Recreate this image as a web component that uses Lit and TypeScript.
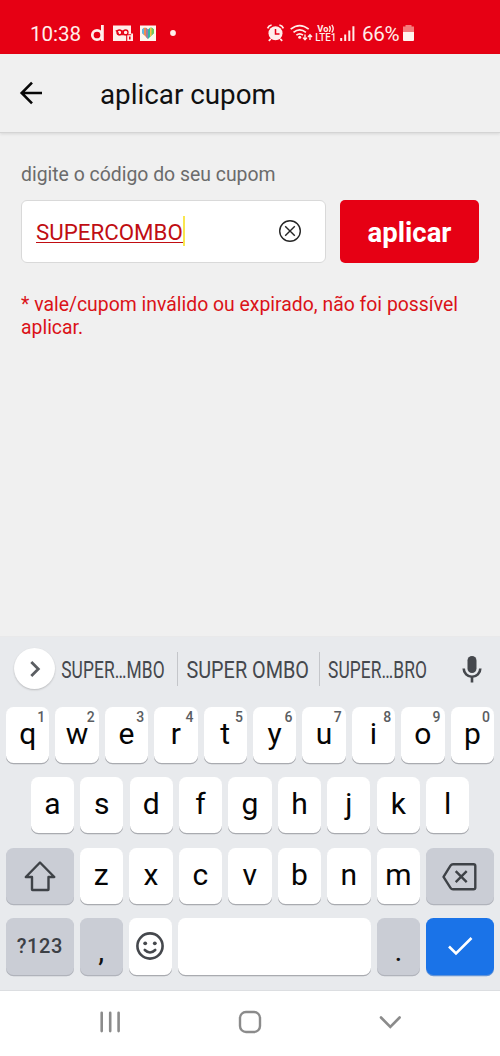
import { LitElement, html, css } from "lit";
import { customElement, property } from "lit/decorators.js";

const topRow = "qwertyuiop".split("");
const homeRow = "asdfghjkl".split("");
const bottomRow = "zxcvbnm".split("");

@customElement("status-bar")
class StatusBar extends LitElement {
  static styles = css`
    :host { display: block; height: 54px; background: #e60014; color: #ffeeea; }
    .bar { display: flex; align-items: center; height: 30px; padding: 18px 86px 6px 30px; font-size: 20.6px; line-height: 30px; }
    .clock { width: 51px; letter-spacing: -0.05px; }
    .left { flex: none; margin-left: 9px; }
    .right { flex: none; margin-left: auto; }
    .percent { width: 38px; margin: 0 3px 0 6px; letter-spacing: -0.3px; }
    .battery { flex: none; }
    .net { font-weight: 700; }
    .clock, .percent { padding-top: 1px; }
  `;
  render() {
    return html`<div class="bar">
      <span class="clock">10:38</span>
      <svg class="left" width="90" height="30" viewBox="90 18 90 30" fill="none">
        <circle cx="97" cy="35" r="4.7" stroke="#ffeeea" stroke-width="2.7" />
        <path d="M102.4 25V41" stroke="#ffeeea" stroke-width="2.8" />
        <path d="M113 25.5h18v8h2v7.5h-20z" fill="#ffeeea" />
        <circle cx="119.4" cy="32.4" r="2.4" stroke="#e60014" stroke-width="1.3" />
        <circle cx="125.6" cy="32.4" r="2.4" stroke="#e60014" stroke-width="1.3" />
        <path d="M115.7 30.6q2 0 3 4.2h4M122.3 30.2v4.6h4M126.7 41v-6.3h4.5" stroke="#e60014" stroke-width="1.1" />
        <path d="M129 36.5h1.6v3H129z" fill="#e60014" />
        <path d="M140 25.5h16V41h-16z" fill="#fff7ee" />
        <path d="M148 39l-6-6v-3.5l2-1.8h2l2 1.8z" fill="#f08b50" />
        <path d="M142 29.5l2-1.8v7.3l-2-2z" fill="#5db9e5" />
        <path d="M146 27.8l2 1.7V39l-2-2z" fill="#9a7fa8" />
        <path d="M148 39l6-6v-3.5l-2-1.8h-2l-2 1.8z" fill="#33b7a1" />
        <path d="M150 27.7h1.8v7.6L150 37z" fill="#f4c63d" />
        <path d="M151.8 27.7l2.2 1.8V33l-2.2 2.2z" fill="#75c95d" />
        <circle cx="173" cy="33" r="2.9" fill="#ffeeea" />
      </svg>
      <svg class="right" width="90" height="30" viewBox="266 18 90 30" fill="none" stroke="#ffeeea">
        <circle cx="275.5" cy="33.3" r="7" fill="#ffeeea" stroke="none" />
        <path d="M267.6 28.4q1-2.8 4-3.4M283.4 28.4q-1-2.8-4-3.4M270.8 38.8l-2 2M280.2 38.8l2 2" stroke-width="1.7" />
        <path d="M275.5 29v5h4" stroke="#e60014" stroke-width="1.5" />
        <path d="M290.7 29.2q9-7.3 18 0M293.5 32.3q6.2-5 12.4 0M296.4 35.2q3.3-2.7 6.6 0" stroke-width="1.7" />
        <circle cx="299.7" cy="37.2" r="1.5" fill="#ffeeea" stroke="none" />
        <path d="M305 34.6v5M303 37.6l2 2.2 2-2.2M310 40v-5M308 37l2-2.3 2 2.3" stroke-width="1.4" />
        <g class="net" fill="#ffeeea" stroke="none">
          <text x="317.3" y="31.8" font-size="9.3" textLength="11.2">Vo</text>
          <text x="315.3" y="41.2" font-size="10.2" font-weight="500" textLength="21" lengthAdjust="spacingAndGlyphs">LTE1</text>
        </g>
        <path d="M329.3 26q2 2.8 0 5.8M331.8 24.9q2.8 3.9 0 7.6" stroke-width="1.3" />
        <path d="M341.2 38v3M345.2 34.6V41M349.3 30.5V41M353.4 26.3V41" stroke-width="2" />
      </svg>
      <span class="percent">66%</span>
      <svg class="battery" width="11" height="30" viewBox="403 18 11 30">
        <path d="M405.5 25h6v1.5h2.5v5.5h-11v-5.5h2.5z" fill="#f47c7c" />
        <path d="M403 32h11v8q0 1-1 1h-9q-1 0-1-1z" fill="#fff5ee" />
      </svg>
    </div>`;
  }
}

@customElement("key-cap")
class KeyCap extends LitElement {
  @property() hint = "";
  static styles = css`
    :host { display: flex; position: relative; align-items: center; justify-content: center; box-sizing: border-box;
      min-width: 0; height: 56px; border-radius: 7.5px; background: #fff; box-shadow: 0 1.2px 0 #a9abb0;
      font-size: 30px; line-height: 40px; color: #050505; padding-bottom: 2px; }
    :host(.dim) { background: #cacdd5; box-shadow: 0 1.2px 0 #b0b3bb; color: #3c4045; }
    :host(.go) { background: #1a73e8; box-shadow: 0 1.2px 0 #6294d8; }
    :host(.low) { height: 57px; padding-bottom: 0; }
    :host(.mode) { font-size: 20px; font-weight: 500; letter-spacing: 0.6px; }
    :host(.punct) { color: #111; padding-top: 9px; }
    .hint { position: absolute; top: 2px; right: 4px; font-size: 14px; font-weight: 500; line-height: 16px; color: #5a5d61; }
  `;
  render() {
    return html`<slot></slot>${this.hint ? html`<span class="hint">${this.hint}</span>` : ""}`;
  }
}

@customElement("soft-keyboard")
class SoftKeyboard extends LitElement {
  static styles = css`
    :host { display: block; height: 355px; background: #e8eaed; box-sizing: border-box; border-top: 1px solid #e9e9ea; border-bottom: 1px solid #dcdee1; }
    .suggestions { display: flex; align-items: center; height: 70px; box-sizing: border-box; padding: 0 15px 7px 13.5px; }
    .more { flex: none; display: grid; place-items: center; width: 41px; height: 41px; border-radius: 50%; background: #fff; box-shadow: 0 1px 2px #0003; }
    .word { flex: none; height: 34px; }
    .first { width: 122.5px; }
    .second { width: 141px; }
    .third { width: 111px; }
    .word + .word { border-left: 1px solid #c4c6ca; }
    .mic { flex: none; margin-left: auto; }
    .rows { display: grid; grid-template-rows: 56px 56px 56px 57px; row-gap: 14.2px; padding: 0.3px 6px 0; }
    .row { display: grid; grid-template-columns: repeat(10, 1fr); column-gap: 6.1px; }
    .home { grid-template-columns: repeat(9, 1fr); padding: 0 24.7px; }
    .bottom { grid-template-columns: 67.5px repeat(7, 1fr) 67.8px; }
    .space { grid-template-columns: 67.5px 43.2px 43.2px 1fr 43.2px 67.8px; }
  `;
  word(text: string, cls: string, x: number, width: number, squeeze: number) {
    return html`<svg class="word ${cls}" fill="#45484d">
      <g transform="translate(${x} 26) scale(${squeeze} 1)">
        <text font-size="24.5" textLength=${width / squeeze}>${text}</text>
      </g>
    </svg>`;
  }
  render() {
    return html`
      <div class="suggestions">
        <div class="more"><svg width="20" height="20" fill="none" stroke="#5b5e62" stroke-width="2.8"><path d="M7.3 3l7 7-7 7" /></svg></div>
        ${this.word("SUPER…MBO", "first", 6.2, 103.5, 0.71)}
        ${this.word("SUPER OMBO", "second", 8.5, 122.5, 0.81)}
        ${this.word("SUPER…BRO", "third", 8, 99, 0.71)}
        <svg class="mic" width="26" height="30" viewBox="0 0 26 30" fill="none" stroke="#45484d" stroke-width="2.6">
          <rect x="8.5" y="2" width="9" height="17" rx="4.5" fill="#45484d" stroke="none" />
          <path d="M4.7 14.5a8.3 8.3 0 0 0 16.6 0M13 22.5V28.5" />
        </svg>
      </div>
      <div class="rows">
        <div class="row">${topRow.map((k, i) => html`<key-cap .hint=${String((i + 1) % 10)}>${k}</key-cap>`)}</div>
        <div class="row home">${homeRow.map((k) => html`<key-cap>${k}</key-cap>`)}</div>
        <div class="row bottom">
          <key-cap class="dim"><svg width="34" height="34" fill="none" stroke="#3e4247" stroke-width="2.4" stroke-linejoin="round"><path d="M17 4.5L31.3 19H25.5V31.5Q25.5 32 25 32H9.5Q9 32 9 31.5V19H2.8Z" /></svg></key-cap>
          ${bottomRow.map((k) => html`<key-cap>${k}</key-cap>`)}
          <key-cap class="dim"><svg width="38" height="34" fill="none" stroke="#3e4247" stroke-width="2.4" stroke-linejoin="round"><path d="M12 6.2H32.5Q34.3 6.2 34.3 8V29.5Q34.3 31.3 32.5 31.3H12Q10.5 31.3 9.5 29.8L2.5 18.8L9.5 7.7Q10.5 6.2 12 6.2ZM14.7 13.2L25.7 24.2M25.7 13.2L14.7 24.2" /></svg></key-cap>
        </div>
        <div class="row space">
          <key-cap class="dim low mode">?123</key-cap>
          <key-cap class="dim low punct">,</key-cap>
          <key-cap class="low"><svg width="30" height="30" fill="none" stroke="#45484d" stroke-width="2.6" stroke-linecap="round"><circle cx="15" cy="15" r="12.6" /><path d="M9.8 19q5.2 5 10.4 0" /><circle cx="10.2" cy="12.3" r="1.9" fill="#45484d" stroke="none" /><circle cx="19.8" cy="12.3" r="1.9" fill="#45484d" stroke="none" /></svg></key-cap>
          <key-cap class="low"></key-cap>
          <key-cap class="dim low punct">.</key-cap>
          <key-cap class="low go"><svg width="28" height="24" fill="none" stroke="#fff" stroke-width="2.6"><path d="M3 12.5l7 7L25.5 4" /></svg></key-cap>
        </div>
      </div>`;
  }
}

@customElement("app-root")
class AppRoot extends LitElement {
  static styles = css`
    :host { display: flex; flex-direction: column; width: 500px; height: 1056px; overflow: hidden; background: #f0f0f0; font-family: Roboto, "Noto Sans", sans-serif; color: #101010; }
    header { display: flex; align-items: center; flex: none; height: 79px; box-sizing: border-box; padding-left: 18px; border-bottom: 1px solid #d4d4d4; box-shadow: 0 1px 3px #0000001c; }
    h1 { margin: 4px 0 0 56px; font-size: 27.8px; font-weight: 400; line-height: 34px; }
    main { flex: 1; padding: 29px 21px 0; }
    .label { font-size: 19.4px; line-height: 26px; color: #6b6b6b; white-space: nowrap; }
    .form { display: flex; gap: 14px; margin-top: 12px; }
    .field { display: flex; align-items: center; box-sizing: border-box; width: 305px; height: 62.5px; padding: 0 23px 0 14px; border: 1.5px solid #d9d9d9; border-radius: 6px; background: #fff; }
    .code { color: #c00d12; font-size: 22.3px; line-height: 26px; border-bottom: 1.3px solid #c00d12; height: 23px; }
    .caret { width: 2.6px; height: 30px; background: #f9e64f; }
    .clear { margin-left: auto; }
    .apply { width: 139px; height: 62.5px; padding: 3px 0 0; border: 0; border-radius: 5px; background: #e60014; color: #fff; font: 700 27.5px/34px Roboto, sans-serif; }
    .error { margin: 30px 0 0; color: #db1218; font-size: 19.4px; line-height: 23px; }
    nav { display: flex; justify-content: space-between; flex: none; height: 65px; box-sizing: border-box; padding: 17px 96px 0; background: #fff; }
  `;
  render() {
    return html`
      <status-bar></status-bar>
      <header>
        <svg width="26" height="26" fill="none" stroke="#080808" stroke-width="2.6"><path d="M24 13H4M14 2.7L3.7 13 14 23.3" /></svg>
        <h1>aplicar cupom</h1>
      </header>
      <main>
        <div class="label">digite o código do seu cupom</div>
        <div class="form">
          <div class="field">
            <span class="code">SUPERCOMBO</span><span class="caret"></span>
            <svg class="clear" width="24" height="24" fill="none" stroke="#252525" stroke-width="1.4"><circle cx="12" cy="12" r="10.3" /><path d="M7.2 7.2l9.6 9.6M16.8 7.2l-9.6 9.6" /></svg>
          </div>
          <button class="apply">aplicar</button>
        </div>
        <p class="error">* vale/cupom inválido ou expirado, não foi possível aplicar.</p>
      </main>
      <soft-keyboard></soft-keyboard>
      <nav>
        <svg width="28" height="28" stroke="#8b8b8b" stroke-width="2.6" stroke-linecap="round"><path d="M5.7 4.7v18.4M14.2 4.7v18.4M22.6 4.7v18.4" /></svg>
        <svg width="28" height="28" fill="none" stroke="#8b8b8b" stroke-width="2.4"><rect x="4" y="4" width="20" height="20" rx="6" /></svg>
        <svg width="28" height="28" fill="none" stroke="#8b8b8b" stroke-width="2.6" stroke-linecap="round"><path d="M5 9.5l9.3 9.3 9.3-9.3" /></svg>
      </nav>`;
  }
}
